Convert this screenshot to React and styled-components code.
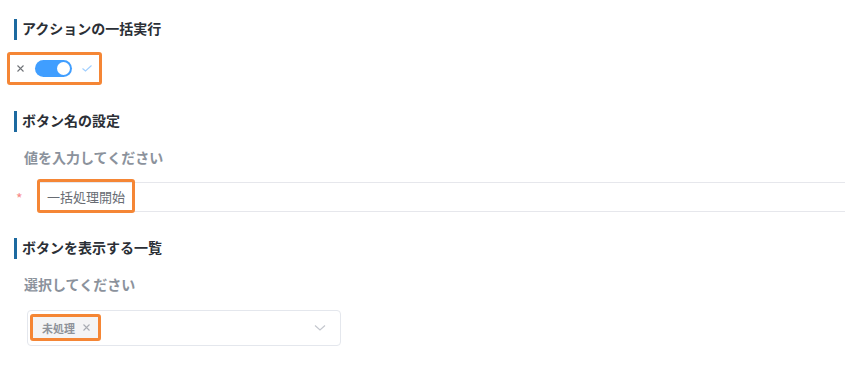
import styled, { createGlobalStyle } from "styled-components";

const GlobalStyle = createGlobalStyle`
  html, body {
    margin: 0;
    padding: 0;
    background: #ffffff;
  }
  body {
    font-family: "Noto Sans CJK JP", "Noto Sans", sans-serif;
    color: #303133;
  }
`;

const Page = styled.div`
  width: 845px;
  height: 376px;
  overflow: hidden;
  padding-top: 19px;
  box-sizing: border-box;
`;

const Heading = styled.div`
  margin: ${({ $top }) => $top || 0}px 0 0 14px;
  border-left: 3px solid #1d6aa0;
  padding-left: 5px;
  height: 21px;
  line-height: 18px;
  font-size: 14px;
  font-weight: 700;
  color: #2b2f36;
`;

const Highlight = styled.div`
  border: 3px solid #f58635;
  border-radius: 3px;
  box-sizing: border-box;
  display: flex;
  align-items: center;
`;

const SwitchBox = styled(Highlight)`
  margin: 12px 0 0 7px;
  width: 95px;
  height: 33px;
  padding: 0 0 0 7px;
  gap: 11px;
`;

const Track = styled.span`
  position: relative;
  width: 37px;
  height: 17px;
  border-radius: 9px;
  background: #409eff;
  margin-right: -1px;
`;

const Knob = styled.span`
  position: absolute;
  top: 2px;
  right: 2px;
  width: 13px;
  height: 13px;
  border-radius: 50%;
  background: #ffffff;
`;

const Label = styled.div`
  margin: 15px 0 0 24px;
  font-size: 14px;
  line-height: 20px;
  font-weight: 700;
  color: #8b929c;
`;

const InputRow = styled.div`
  margin-top: 15px;
  display: flex;
  align-items: flex-start;
  padding-left: 16px;
`;

const Required = styled.span`
  width: 22px;
  padding-top: 9px;
  font-size: 14px;
  line-height: 14px;
  color: #f78989;
`;

const Input = styled.div`
  flex: 1;
  height: 30px;
  box-sizing: border-box;
  border: 1px solid #e6e7ec;
  border-right: none;
  display: flex;
  align-items: flex-start;
`;

const InputValue = styled(Highlight)`
  margin: -4px 0 0 -2px;
  width: 98px;
  height: 34px;
  padding-left: 7px;
  font-size: 13px;
  color: #686c73;
`;

const Select = styled.div`
  margin: 16px 0 0 27px;
  width: 314px;
  height: 36px;
  box-sizing: border-box;
  border: 1px solid #e4e7ed;
  border-radius: 4px;
  display: flex;
  align-items: center;
  justify-content: space-between;
  padding: 0 14px 0 2px;
`;

const Tag = styled(Highlight)`
  width: 71px;
  height: 27px;
  margin-top: -1px;
  background: #f4f4f5;
  padding-left: 9px;
  gap: 8px;
  font-size: 11px;
  font-weight: 700;
  color: #8e9299;
`;

function Cross({ color = "#707378", size = 7 }) {
  return (
    <svg width={size} height={size} viewBox="0 0 7 7">
      <path d="M0.5 0.5 L6.5 6.5 M6.5 0.5 L0.5 6.5" fill="none" stroke={color} strokeWidth="1.1" />
    </svg>
  );
}

function Check() {
  return (
    <svg width="10" height="7" viewBox="0 0 10 7">
      <path d="M0.5 3.5 L3.5 6 L9.5 0.5" fill="none" stroke="#a0cfff" strokeWidth="1.1" />
    </svg>
  );
}

function Chevron() {
  return (
    <svg width="12" height="8" viewBox="0 0 12 8">
      <path d="M1 1.5 L6 6 L11 1.5" fill="none" stroke="#c4c7ce" strokeWidth="1.2" />
    </svg>
  );
}

export default function App() {
  return (
    <>
      <GlobalStyle />
      <Page>
        <Heading>アクションの一括実行</Heading>
        <SwitchBox>
          <Cross />
          <Track>
            <Knob />
          </Track>
          <Check />
        </SwitchBox>

        <Heading $top={26}>ボタン名の設定</Heading>
        <Label>値を入力してください</Label>
        <InputRow>
          <Required>*</Required>
          <Input>
            <InputValue>一括処理開始</InputValue>
          </Input>
        </InputRow>

        <Heading $top={26}>ボタンを表示する一覧</Heading>
        <Label>選択してください</Label>
        <Select>
          <Tag>
            未処理
            <Cross color="#a8abb2" />
          </Tag>
          <Chevron />
        </Select>
      </Page>
    </>
  );
}
